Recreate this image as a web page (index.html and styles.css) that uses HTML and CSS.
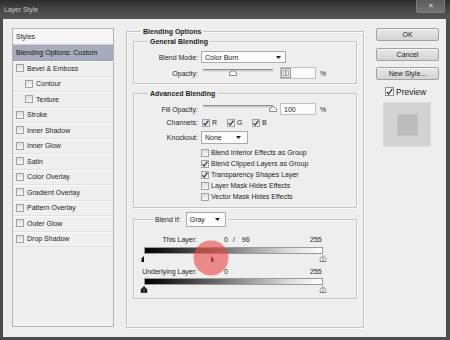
FILE: index.html
```html
<!DOCTYPE html>
<html>
<head>
<meta charset="utf-8">
<link rel="stylesheet" href="styles.css">
</head>
<body>
<div class="window">
  <div class="titlebar">
    <span class="title">Layer Style</span>
    <span class="close">✕</span>
  </div>
  <div class="main">
    <div class="styles-panel">
      <div class="row head">Styles</div>
      <div class="row sel">Blending Options: Custom</div>
      <div class="row"><span class="cb"></span>Bevel &amp; Emboss</div>
      <div class="row sub"><span class="cb"></span>Contour</div>
      <div class="row sub"><span class="cb"></span>Texture</div>
      <div class="row"><span class="cb"></span>Stroke</div>
      <div class="row"><span class="cb"></span>Inner Shadow</div>
      <div class="row"><span class="cb"></span>Inner Glow</div>
      <div class="row"><span class="cb"></span>Satin</div>
      <div class="row"><span class="cb"></span>Color Overlay</div>
      <div class="row"><span class="cb"></span>Gradient Overlay</div>
      <div class="row"><span class="cb"></span>Pattern Overlay</div>
      <div class="row"><span class="cb"></span>Outer Glow</div>
      <div class="row"><span class="cb"></span>Drop Shadow</div>
    </div>

    <div class="options">
      <div class="group outer">
        <div class="gtitle t-outer">Blending Options</div>

        <div class="group general">
          <div class="gtitle">General Blending</div>
          <div class="frow r-blend">
            <span class="lbl">Blend Mode:</span>
            <div class="select s-mode"><span>Color Burn</span><svg class="arrow" width="5" height="3" viewBox="0 0 5 3"><polygon points="0,0 5,0 2.5,3" fill="#222"/></svg></div>
          </div>
          <div class="frow r-op">
            <span class="lbl">Opacity:</span>
            <div class="slider"><div class="track"></div><svg class="thumb" style="left:43%" width="8" height="6" viewBox="0 0 8 6"><path d="M0.5 5.5 V2.5 L4 0.5 L7.5 2.5 V5.5 Z" fill="#fbfbfb" stroke="#8a8a8a"/></svg></div>
            <div class="num"><svg width="10" height="10" viewBox="0 0 10 10"><rect x="0.5" y="0.5" width="9" height="9" fill="#ececec" stroke="#9a9a9a"/><rect x="2.5" y="2.5" width="5" height="5" fill="#fff" stroke="#b0b0b0"/><line x1="5" y1="2" x2="5" y2="8" stroke="#666"/></svg></div>
            <span class="pct">%</span>
          </div>
        </div>

        <div class="group advanced">
          <div class="gtitle">Advanced Blending</div>
          <div class="frow r-fill">
            <span class="lbl">Fill Opacity:</span>
            <div class="slider"><div class="track"></div><svg class="thumb" style="left:100%" width="8" height="6" viewBox="0 0 8 6"><path d="M0.5 5.5 V2.5 L4 0.5 L7.5 2.5 V5.5 Z" fill="#fbfbfb" stroke="#8a8a8a"/></svg></div>
            <div class="num">100</div>
            <span class="pct">%</span>
          </div>
          <div class="frow r-chan">
            <span class="lbl">Channels:</span>
            <span class="chan"><span class="cb on"><svg width="6" height="6" viewBox="0 0 6 6"><path d="M0.6 3.2 L2.2 5 L5.4 0.6" fill="none" stroke="#2a2a3a" stroke-width="1.1"/></svg></span>R</span>
            <span class="chan"><span class="cb on"><svg width="6" height="6" viewBox="0 0 6 6"><path d="M0.6 3.2 L2.2 5 L5.4 0.6" fill="none" stroke="#2a2a3a" stroke-width="1.1"/></svg></span>G</span>
            <span class="chan"><span class="cb on"><svg width="6" height="6" viewBox="0 0 6 6"><path d="M0.6 3.2 L2.2 5 L5.4 0.6" fill="none" stroke="#2a2a3a" stroke-width="1.1"/></svg></span>B</span>
          </div>
          <div class="frow r-knock">
            <span class="lbl">Knockout:</span>
            <div class="select s-knock"><span>None</span><svg class="arrow" width="5" height="3" viewBox="0 0 5 3"><polygon points="0,0 5,0 2.5,3" fill="#222"/></svg></div>
          </div>
          <div class="checklist">
            <div class="crow"><span class="cb"></span>Blend Interior Effects as Group</div>
            <div class="crow"><span class="cb on"><svg width="6" height="6" viewBox="0 0 6 6"><path d="M0.6 3.2 L2.2 5 L5.4 0.6" fill="none" stroke="#2a2a3a" stroke-width="1.1"/></svg></span>Blend Clipped Layers as Group</div>
            <div class="crow"><span class="cb on"><svg width="6" height="6" viewBox="0 0 6 6"><path d="M0.6 3.2 L2.2 5 L5.4 0.6" fill="none" stroke="#2a2a3a" stroke-width="1.1"/></svg></span>Transparency Shapes Layer</div>
            <div class="crow"><span class="cb"></span>Layer Mask Hides Effects</div>
            <div class="crow"><span class="cb"></span>Vector Mask Hides Effects</div>
          </div>
        </div>

        <div class="group blendif">
          <div class="bi-legend">
            <span>Blend If:</span>
            <div class="select s-gray"><span>Gray</span><svg class="arrow" width="5" height="3" viewBox="0 0 5 3"><polygon points="0,0 5,0 2.5,3" fill="#222"/></svg></div>
          </div>
          <div class="brow b-this">
            <span class="blbl">This Layer:</span>
            <span class="bvals"><span>0</span><span class="slash">/</span><span class="split">96</span></span>
            <span>255</span>
          </div>
          <div class="bar"></div>
          <div class="handles">
            <svg class="handle" style="left:0%" width="7" height="7" viewBox="0 0 7 7"><path d="M1 7 V3.5 L3.5 1 V7 Z" fill="#111"/></svg>
            <svg class="handle" style="left:37.6%" width="7" height="7" viewBox="0 0 7 7"><path d="M3.5 7 V1 L6 3.5 V7 Z" fill="#222"/></svg>
            <svg class="handle" style="left:100%" width="7" height="7" viewBox="0 0 7 7"><path d="M0.5 6.5 V3.5 L3.5 0.5 L6.5 3.5 V6.5 Z" fill="#fafafa" stroke="#7a7a7a"/><line x1="3.5" y1="2" x2="3.5" y2="6.5" stroke="#7a7a7a"/></svg>
            <span class="spot" style="left:37.6%"></span>
          </div>
          <div class="brow b-under">
            <span class="blbl">Underlying Layer:</span>
            <span class="bvals"><span>0</span></span>
            <span>255</span>
          </div>
          <div class="bar"></div>
          <div class="handles">
            <svg class="handle" style="left:0%" width="7" height="7" viewBox="0 0 7 7"><path d="M0.5 6.5 V3.5 L3.5 0.5 L6.5 3.5 V6.5 Z" fill="#111" stroke="#333"/><line x1="3.5" y1="2.5" x2="3.5" y2="6.5" stroke="#777"/></svg>
            <svg class="handle" style="left:100%" width="7" height="7" viewBox="0 0 7 7"><path d="M0.5 6.5 V3.5 L3.5 0.5 L6.5 3.5 V6.5 Z" fill="#fafafa" stroke="#7a7a7a"/><line x1="3.5" y1="2" x2="3.5" y2="6.5" stroke="#7a7a7a"/></svg>
          </div>
        </div>
      </div>
    </div>

    <div class="side">
      <div class="btn b-ok">OK</div>
      <div class="btn b-cancel">Cancel</div>
      <div class="btn b-new">New Style...</div>
      <div class="preview"><span class="cb big on"><svg width="7" height="7" viewBox="0 0 7 7"><path d="M0.8 3.8 L2.6 6 L6.3 0.8" fill="none" stroke="#2a2a3a" stroke-width="1.2"/></svg></span>Preview</div>
      <div class="swatch"><div class="swatch-inner"></div></div>
    </div>
  </div>
</div>
</body>
</html>
```

FILE: styles.css
```css
* { box-sizing: border-box; margin: 0; padding: 0; }
html, body { width: 450px; height: 340px; overflow: hidden; }
body {
  font-family: "Liberation Sans", Arial, sans-serif;
  font-size: 7px;
  color: #1e1e1e;
  background: #4a4a4a;
}
.window {
  width: 450px; height: 340px;
  display: flex; flex-direction: column;
  background: #4c4c4c;
}
.titlebar {
  height: 19px; flex: none;
  display: flex; align-items: flex-start; justify-content: space-between;
  background: linear-gradient(#2b2b2b, #454545 45%, #565656);
}
.title { font-size: 6.8px; line-height: 9px; color: #c6c6c6; margin: 5px 0 0 4px; }
.close {
  width: 29px; height: 13px; margin-right: 5px;
  background: linear-gradient(#5c5c5c, #727272);
  border: 1px solid #7d7d7d; border-top: none; border-radius: 0 0 2px 2px;
  color: #d0d0d0; font-size: 7px; line-height: 12px; text-align: center;
}
.main {
  flex: 1; margin: 0 4px 3px 3px;
  background: #eeeeee;
  display: flex; align-items: flex-start;
  padding: 9px 0 0 9px;
}

/* left styles list */
.styles-panel {
  width: 102px; height: 299px; margin-right: 12px; flex: none;
  border: 1px solid #b2b2b2;
  background: #efefef;
}
.row {
  height: 15.5px; display: flex; align-items: center;
  padding-left: 3px;
  border-bottom: 1px solid #e2e2e2;
  box-shadow: inset 0 1px 0 #f9f9f9;
  white-space: nowrap;
}
.row.head { height: 16px; background: #f5f5f5; border-bottom: 1px solid #d0d0d0; }
.row.sel { height: 16px; background: #a8abbe; box-shadow: none; border-bottom: 1px solid #9ea1b3; color: #151515; }
.row .cb { margin-right: 3px; }
.row.sub { padding-left: 12px; }

.cb {
  width: 8px; height: 8px; flex: none;
  border: 1px solid #a2a2a2;
  background: linear-gradient(#dedede, #f6f6f6);
  display: inline-flex; align-items: center; justify-content: center;
}
.cb.big { width: 9px; height: 9px; border-color: #8e8e8e; background: #f8f8f8; }

/* middle options */
.options { width: 238px; margin-right: 12px; flex: none; }
.group {
  border: 1px solid #c4c4c4;
  box-shadow: inset 1px 1px 0 #fafafa, 1px 1px 0 #fafafa;
}
.gtitle {
  font-weight: bold; line-height: 9px;
  margin: -5px 0 0 14px; padding: 0 2px;
  background: #eeeeee; width: max-content;
}
.outer { margin-top: 3px; height: 297px; padding: 0 6px; }
.gtitle.t-outer { margin-left: 8px; }
.general { margin-top: 5px; padding-bottom: 4px; }
.advanced { margin-top: 9px; padding-bottom: 5px; }
.blendif { margin-top: 11px; padding-bottom: 5px; }

.frow { display: flex; align-items: center; height: 12px; white-space: nowrap; }
.lbl { width: 64px; text-align: right; margin-right: 3px; flex: none; }
.r-blend { margin-top: 5px; }
.r-op { margin-top: 4px; }
.r-fill { margin-top: 5px; }
.r-chan { margin-top: 2px; height: 11px; }
.r-chan .lbl { margin-right: 4px; }
.r-knock { margin-top: 3px; height: 13px; }

.select {
  display: flex; align-items: center; justify-content: space-between;
  height: 100%;
  border: 1px solid #ababab;
  background: #fcfcfc;
  padding: 0 4px 0 3px;
}
.s-mode { width: 85px; }
.s-knock { width: 47px; padding-right: 6px; }
.arrow { display: block; }

.slider { position: relative; width: 70px; height: 12px; margin-left: 2px; flex: none; }
.track {
  margin-top: 2px; height: 3px;
  background: #c9c9c9; border-top: 1px solid #8f8f8f; border-bottom: 1px solid #e0e0e0;
}
.thumb { position: absolute; top: 3px; transform: translateX(-50%); display: block; }
.num {
  width: 36px; height: 12px; margin-left: 7px; flex: none;
  border: 1px solid #c0c0c0; background: #fafafa;
  padding-left: 3px; display: flex; align-items: center;
}
.r-op .num { padding-left: 0; }
.pct { margin-left: 4px; }

.chan { display: flex; align-items: center; width: 25px; flex: none; }
.chan .cb { margin-right: 2px; }

.checklist { margin-top: 3px; margin-left: 67px; }
.crow { height: 11px; display: flex; align-items: center; white-space: nowrap; }
.crow .cb { margin-right: 2px; }

/* blend if */
.bi-legend {
  display: flex; align-items: center; height: 15px;
  margin: -8px 0 0 19px; padding: 0 2px; width: max-content;
  background: #eeeeee;
}
.s-gray { width: 40px; height: 15px; margin-left: 5px; padding-right: 5px; }
.brow { display: flex; align-items: center; height: 10px; white-space: nowrap; }
.blbl { width: 63px; text-align: right; flex: none; }
.bvals { width: 86px; margin-left: 27px; display: flex; flex: none; }
.slash { margin-left: 5px; }
.split { margin-left: 7px; }
.b-this { margin-top: 7px; }
.b-under { margin-top: 4px; }
.bar {
  margin: 3px 0 0 10px; width: 179px; height: 7px;
  background: linear-gradient(to right, #000 0%, #111 8%, #777 45%, #d8d8d8 80%, #fff 100%);
  border: 1px solid #9a9a9a;
}
.b-under + .bar { margin-top: 2px; }
.handles { position: relative; margin-left: 10px; width: 179px; height: 8px; }
.handle { position: absolute; top: 1px; transform: translateX(-50%); display: block; }
.spot {
  position: absolute; top: 50%; width: 35px; height: 35px;
  transform: translate(-50%, -50%);
  border-radius: 50%;
  background: rgba(234, 72, 72, 0.62);
}

/* right side */
.side { width: 63px; flex: none; display: flex; flex-direction: column; }
.btn {
  height: 13px; line-height: 11px; text-align: center;
  border: 1px solid #a2a2a2; border-radius: 2px;
  background: linear-gradient(#e8e8e8, #d3d3d3);
  box-shadow: inset 0 1px 0 #f6f6f6;
  color: #222;
}
.b-cancel { margin-top: 7px; }
.b-new { margin-top: 6px; }
.preview {
  margin-top: 6px; height: 11px; padding-left: 9px;
  display: flex; align-items: center;
  font-size: 8.5px;
}
.preview .cb { margin-right: 2px; }
.swatch {
  margin: 5px 0 0 7px; width: 48px; height: 45px;
  background: #d2d2d2; border: 1px solid #dcdcdc;
  display: flex; align-items: center; justify-content: center;
}
.swatch-inner { width: 21px; height: 22px; background: #bcbcbc; border: 1px solid #c4c4c4; }
```
